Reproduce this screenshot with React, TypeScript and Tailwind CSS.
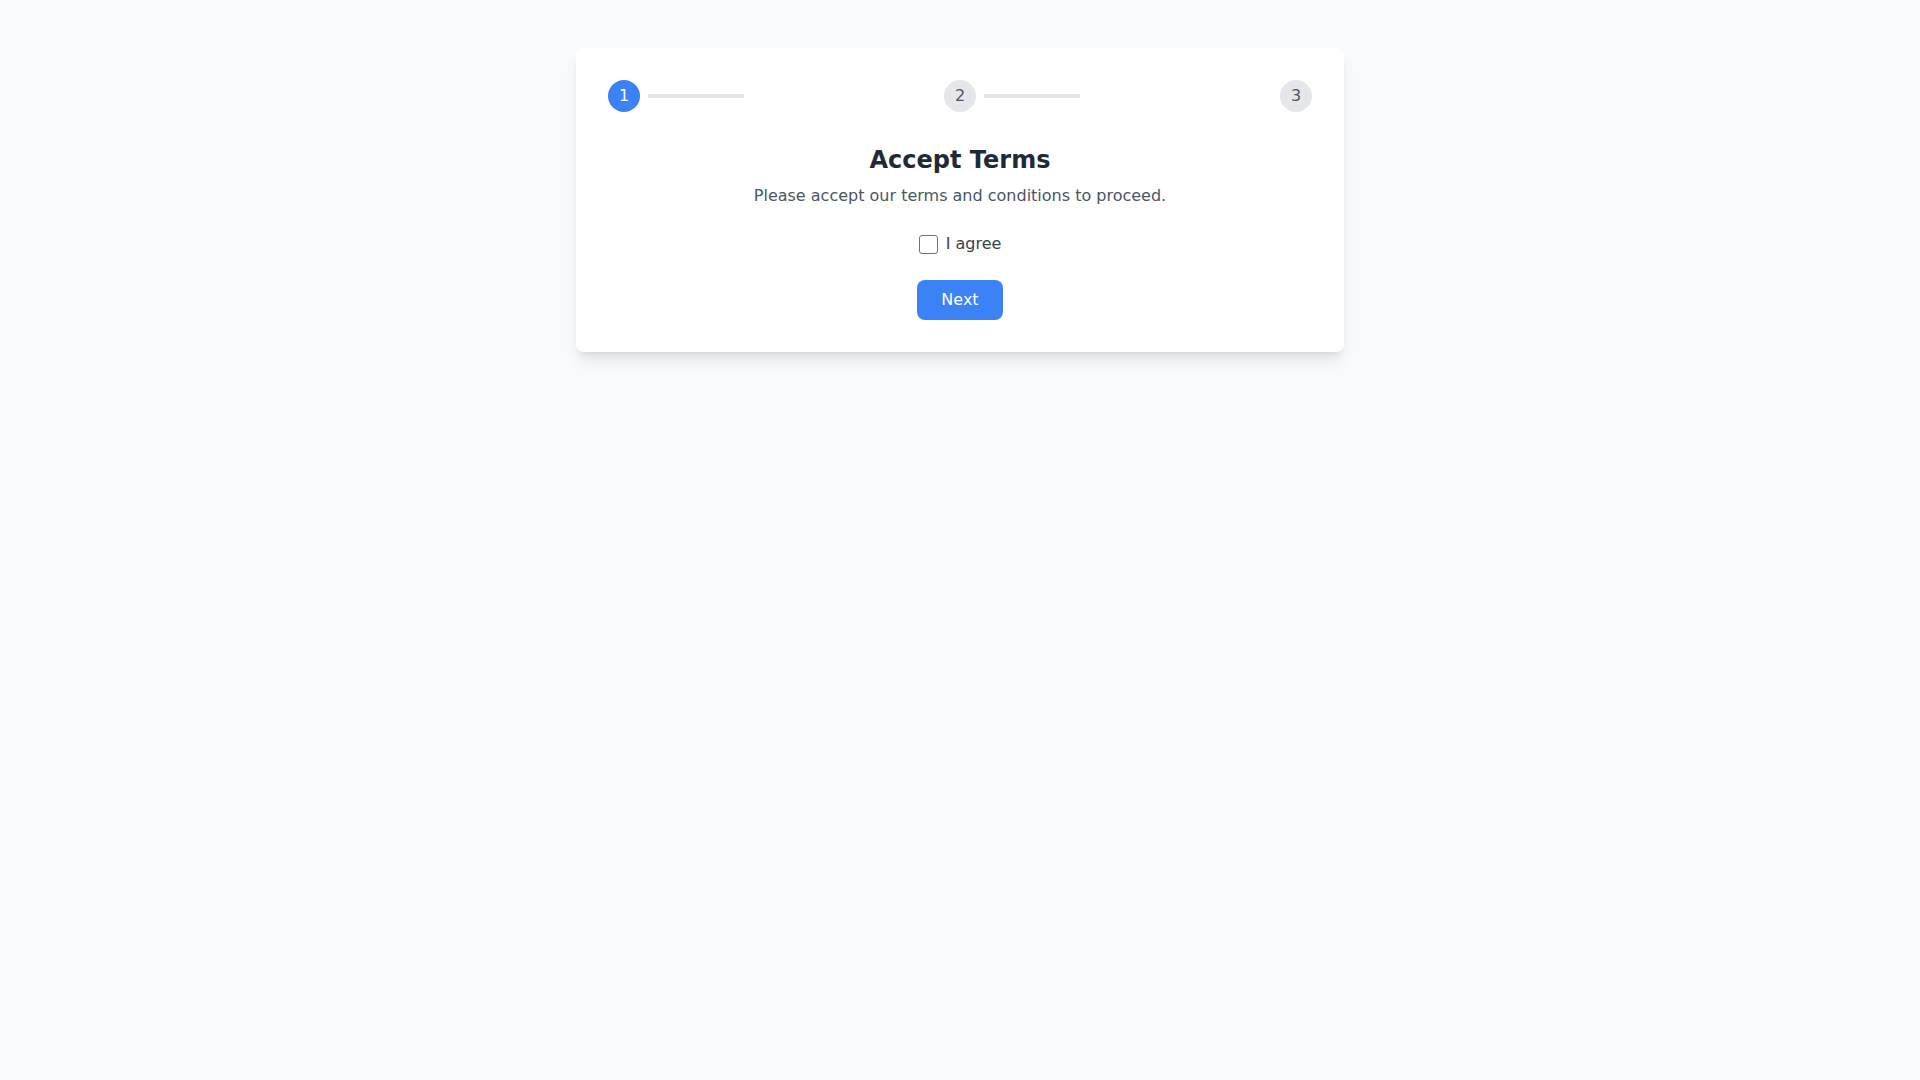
import { useState } from 'react'

const steps = [1, 2, 3]

export default function App() {
  const [step] = useState(1)
  const [agreed, setAgreed] = useState(false)

  return (
    <div className="min-h-screen bg-[#f9fafb] pt-12 font-['DejaVu_Sans',sans-serif]">
      <div className="mx-auto w-[768px] rounded-lg bg-white p-8 shadow-[0_10px_15px_-3px_rgba(0,0,0,0.1),0_4px_6px_-4px_rgba(0,0,0,0.1)]">
        <div className="mb-8 flex items-center justify-between">
          {steps.map((s) => (
            <div key={s} className="flex items-center">
              <div
                className={
                  s === step
                    ? 'flex h-8 w-8 items-center justify-center rounded-full bg-[#3b82f6] text-white'
                    : 'flex h-8 w-8 items-center justify-center rounded-full bg-[#e5e7eb] text-[#4b5563]'
                }
              >
                {s}
              </div>
              {s < steps.length && <div className="ml-2 h-1 w-24 bg-[#e5e7eb]" />}
            </div>
          ))}
        </div>

        <div className="text-center">
          <h2 className="text-2xl font-bold text-[#1f2937]">Accept Terms</h2>
          <p className="mt-2 text-[#4b5563]">Please accept our terms and conditions to proceed.</p>

          <label className="mt-6 flex items-center justify-center text-[#374151]">
            <input
              type="checkbox"
              checked={agreed}
              onChange={(e) => setAgreed(e.target.checked)}
              className="h-[19px] w-[19px] appearance-none rounded-[3px] border border-[#6b7280] bg-white"
            />
            <span className="ml-2">I agree</span>
          </label>

          <button className="mt-6 rounded-lg bg-[#3b82f6] px-6 py-2 text-white">Next</button>
        </div>
      </div>
    </div>
  )
}
